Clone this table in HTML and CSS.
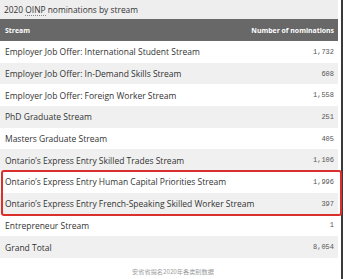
FILE: index.html
```html
<!DOCTYPE html>
<html lang="en">
<head>
<meta charset="utf-8">
<title>2020 OINP nominations by stream</title>
<link rel="stylesheet" href="styles.css">
</head>
<body>
<div class="frame">
  <div class="page">
    <div class="title">2020 <abbr title="Ontario Immigrant Nominee Program">OINP</abbr> nominations by stream</div>
    <div class="table">
      <div class="row head"><span>Stream</span><span>Number of nominations</span></div>
      <div class="row"><span>Employer Job Offer: International Student Stream</span><span class="num">1,732</span></div>
      <div class="row alt"><span>Employer Job Offer: In-Demand Skills Stream</span><span class="num">608</span></div>
      <div class="row"><span>Employer Job Offer: Foreign Worker Stream</span><span class="num">1,558</span></div>
      <div class="row alt"><span>PhD Graduate Stream</span><span class="num">251</span></div>
      <div class="row"><span>Masters Graduate Stream</span><span class="num">405</span></div>
      <div class="row alt"><span>Ontario’s Express Entry Skilled Trades Stream</span><span class="num">1,106</span></div>
      <div class="highlight">
        <div class="row"><span>Ontario’s Express Entry Human Capital Priorities Stream</span><span class="num">1,996</span></div>
        <div class="row alt"><span>Ontario’s Express Entry French-Speaking Skilled Worker Stream</span><span class="num">397</span></div>
      </div>
      <div class="row"><span>Entrepreneur Stream</span><span class="num">1</span></div>
      <div class="row alt total"><span>Grand Total</span><span class="num">8,054</span></div>
    </div>
    <div class="caption">安省省提名2020年各类别数据</div>
  </div>
  <div class="edge"></div>
</div>
</body>
</html>
```

FILE: styles.css
```css
html, body {
  margin: 0;
  padding: 0;
  background: #ffffff;
}

body {
  font-family: "Open Sans", "Noto Sans", sans-serif;
  color: #333333;
}

.frame {
  display: flex;
  height: 279px;
  overflow: hidden;
}

.page {
  width: 338px;
  display: flex;
  flex-direction: column;
}

.edge {
  width: 2px;
  margin-left: 3px;
  background: #3a3a3a;
  align-self: stretch;
}

.title {
  height: 19px;
  background: #eeeeee;
  font-size: 8.4px;
  line-height: 19px;
  padding-left: 4px;
  color: #333333;
}

.title abbr {
  text-decoration: none;
  border-bottom: 1px dotted #888888;
}

.table {
  display: flex;
  flex-direction: column;
}

.row {
  height: 21.7px;
  display: flex;
  align-items: center;
  justify-content: space-between;
  padding: 0 4px 0 5px;
  font-size: 8.5px;
  background: #ffffff;
}

.row.alt {
  background: #f0f0f0;
}

.row.head {
  height: 22px;
  background: #686868;
  color: #ffffff;
  font-weight: 700;
  font-size: 6.9px;
}

.num {
  font-family: "Liberation Mono", "DejaVu Sans Mono", monospace;
  font-size: 7px;
  color: #555555;
}

.highlight {
  position: relative;
}

.highlight::after {
  content: "";
  position: absolute;
  left: 1px;
  right: -4px;
  top: -1px;
  bottom: -1px;
  border: 2px solid #d9302c;
  border-radius: 3px;
  pointer-events: none;
}

.caption {
  margin-top: 9px;
  padding-left: 8px;
  text-align: center;
  font-family: "Noto Sans CJK SC", sans-serif;
  font-size: 6.2px;
  color: #9a9a9a;
}
```
